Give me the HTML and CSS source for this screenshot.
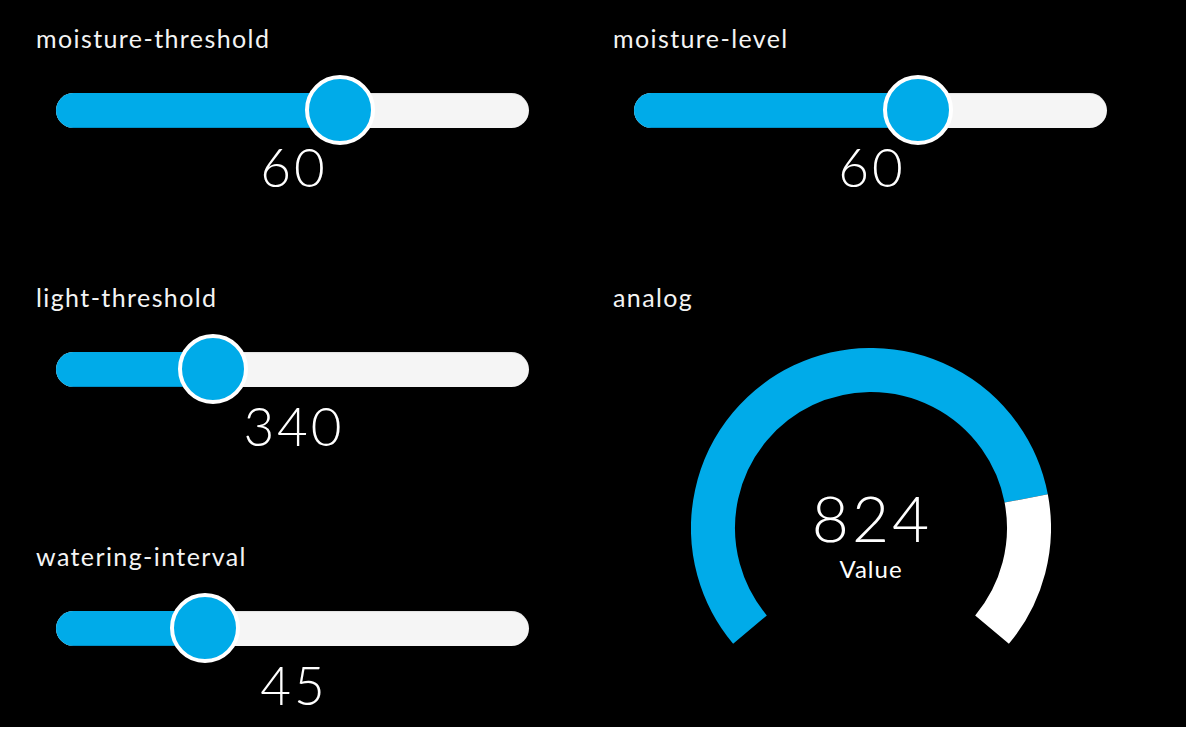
FILE: index.html
```html
<!DOCTYPE html>
<html>
<head>
<meta charset="utf-8">
<link rel="stylesheet" href="styles.css">
</head>
<body>
<main class="board">
  <section class="col">
    <div class="widget">
      <div class="label">moisture-threshold</div>
      <div class="slider">
        <div class="track"><div class="fill" style="width:60%"></div></div>
        <div class="thumb" style="left:60%"></div>
      </div>
      <div class="value">60</div>
    </div>
    <div class="widget">
      <div class="label">light-threshold</div>
      <div class="slider">
        <div class="track"><div class="fill" style="width:33.2%"></div></div>
        <div class="thumb" style="left:33.2%"></div>
      </div>
      <div class="value">340</div>
    </div>
    <div class="widget">
      <div class="label">watering-interval</div>
      <div class="slider">
        <div class="track"><div class="fill" style="width:31.5%"></div></div>
        <div class="thumb" style="left:31.5%"></div>
      </div>
      <div class="value">45</div>
    </div>
  </section>
  <section class="col right">
    <div class="widget">
      <div class="label">moisture-level</div>
      <div class="slider">
        <div class="track"><div class="fill" style="width:60%"></div></div>
        <div class="thumb" style="left:60%"></div>
      </div>
      <div class="value">60</div>
    </div>
    <div class="widget">
      <div class="label">analog</div>
      <div class="gauge-box">
        <svg class="gauge" width="360" height="300" viewBox="0 0 360 300">
          <path d="M 58.97 281.56 A 158 158 0 1 1 335.21 150.45" fill="none" stroke="#00abe9" stroke-width="44"/>
          <path d="M 335.21 150.45 A 158 158 0 0 1 301.03 281.56" fill="none" stroke="#ffffff" stroke-width="44"/>
          <text class="g-num" x="181" y="194" text-anchor="middle">824</text>
          <text class="g-unit" x="180" y="230" text-anchor="middle">Value</text>
        </svg>
      </div>
    </div>
  </section>
</main>
</body>
</html>
```
FILE: styles.css
```css
html, body {
  margin: 0;
  padding: 0;
  background: #ffffff;
}
body {
  font-family: "Lato", "Open Sans", "Liberation Sans", sans-serif;
  color: #ffffff;
}
.board {
  width: 1186px;
  height: 727px;
  background: #000000;
  display: grid;
  grid-template-columns: 577px 609px;
  overflow: hidden;
}
.col {
  display: flex;
  flex-direction: column;
}
.widget {
  height: 259px;
  padding-top: 24px;
  padding-left: 36px;
  box-sizing: border-box;
}
.label {
  font-size: 25px;
  line-height: 28px;
  font-weight: 400;
  color: #f4f4f4;
  letter-spacing: 1.4px;
}
.slider {
  position: relative;
  margin-top: 23px;
  margin-left: 20px;
  width: 473px;
  height: 70px;
  display: flex;
  align-items: center;
}
.right .slider {
  margin-left: 21px;
}
.track {
  width: 100%;
  height: 35px;
  border-radius: 18px;
  background: #f5f5f5;
  box-shadow: inset 0 1px 1px rgba(0, 0, 0, 0.08);
  overflow: hidden;
  display: flex;
}
.fill {
  height: 100%;
  background: #00abe9;
  box-shadow: inset 0 -1px 0 rgba(0, 60, 100, 0.25);
}
.thumb {
  position: absolute;
  top: 50%;
  width: 62px;
  height: 62px;
  border: 4px solid #ffffff;
  border-radius: 50%;
  background: #00abe9;
  transform: translate(-50%, -50%);
}
.value {
  margin-left: 20px;
  width: 473px;
  text-align: center;
  font-size: 53px;
  line-height: 46px;
  font-weight: 300;
  letter-spacing: 3px;
  text-indent: 3px;
  margin-top: -1px;
}
.right .value {
  margin-left: 21px;
}
.gauge-box {
  margin-top: 37px;
  margin-left: 21px;
  width: 473px;
  display: flex;
  justify-content: center;
}
.gauge {
  display: block;
}
.g-num {
  fill: #ffffff;
  font-family: "Lato", "Open Sans", "Liberation Sans", sans-serif;
  font-size: 64px;
  font-weight: 300;
  letter-spacing: 3px;
}
.g-unit {
  fill: #ffffff;
  font-family: "Lato", "Open Sans", "Liberation Sans", sans-serif;
  font-size: 24px;
  font-weight: 400;
  letter-spacing: 1px;
}
```
